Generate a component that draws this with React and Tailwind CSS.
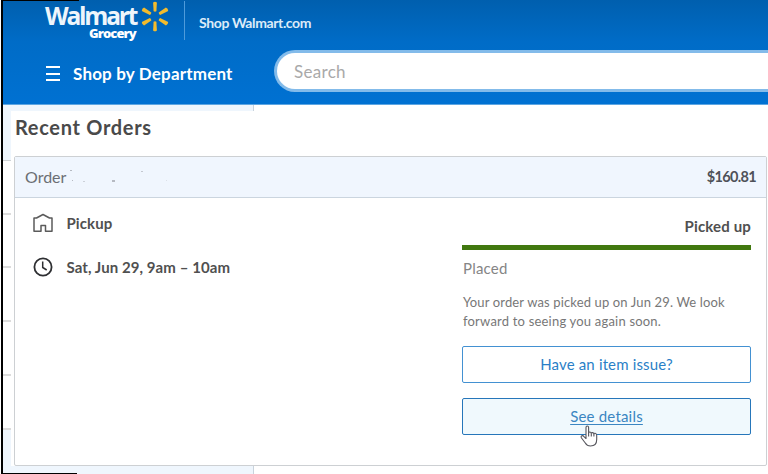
import React from "react";

function Spark() {
  return (
    <svg className="mt-px ml-[3px] h-[31px] w-[28px] shrink-0" viewBox="0 0 28 31" fill="#f3bb2c">
      <path d="M12.100 1.600q1.900-1.800 3.800 0L15.400 10.300q-1.400.8-2.800 0z" />
      <path d="M12.100 29.400q1.900 1.800 3.800 0L15.400 20.700q-1.400-.8-2.800 0z" />
      <path d="M.8 9.900q0-2.500 2.300-3.300l7.200 5q0 1.700-1.400 2.500z" />
      <path d="M27.200 9.900q0-2.500-2.300-3.300l-7.200 5q0 1.700 1.400 2.500z" />
      <path d="M.8 21.100q0 2.500 2.300 3.300l7.200-5q0-1.700-1.400-2.500z" />
      <path d="M27.200 21.100q0 2.500-2.300 3.300l-7.200-5q0-1.700 1.400-2.500z" />
    </svg>
  );
}

function Header() {
  return (
    <header className="h-[105px] shrink-0 overflow-hidden border-b border-[#5ea6e2] bg-linear-to-b from-[#005fae] via-[#006cc7] via-40% to-[#0071d2] text-white">
      <div className="flex h-[46px]">
        <div className="ml-[42px] w-[93px]">
          <div className="h-[27px] whitespace-nowrap font-['Open_Sans',sans-serif] text-[24.500px] leading-[32px] font-bold tracking-[-2.200px] text-[#eef5fb]">
            Walmart
          </div>
          <div className="pl-[44px] font-['Open_Sans',sans-serif] text-[13px] leading-[12px] font-extrabold tracking-[-0.900px]">
            Grocery
          </div>
        </div>
        <Spark />
        <div className="mt-px ml-[15px] h-[39px] w-px bg-[#4e9bdb]" />
        <a className="ml-[14px] whitespace-nowrap text-[14px] leading-[45px] font-bold tracking-[-0.380px] text-[#dcebf8]">
          Shop Walmart.com
        </a>
      </div>
      <div className="flex">
        <div className="mt-[20px] ml-[43px] flex h-[15px] w-[14px] flex-col justify-between">
          <span className="h-[2px] bg-white" />
          <span className="h-[2px] bg-white" />
          <span className="h-[2px] bg-white" />
        </div>
        <span className="ml-[13px] w-[201px] whitespace-nowrap text-[17px] leading-[56px] font-bold tracking-[0.180px]">
          Shop by Department
        </span>
        <div className="mt-[4px] h-[42px] flex-1 rounded-l-full border-[3px] border-r-0 border-[#83bbea] bg-white pl-[17px] text-[17px] leading-[37px] tracking-[0.300px] text-[#a9a9a9]">
          Search
        </div>
      </div>
    </header>
  );
}

function Rail() {
  return (
    <div className="flex w-[8px] flex-col">
      <div className="h-[56px] border-b border-[#cfd3d6] bg-[#eff6fd]" />
      <div className="h-[54px] border-b-2 border-[#dcdcdc]" />
      <div className="h-[53px] border-b-2 border-[#dcdcdc]" />
      <div className="h-[54px] border-b-2 border-[#dcdcdc]" />
      <div className="h-[54px] border-b-2 border-[#dcdcdc]" />
      <div className="h-[54px] border-b-2 border-[#dcdcdc]" />
      <div className="flex-1 bg-[#eff6fd]" />
    </div>
  );
}

function HomeIcon() {
  return (
    <svg className="h-[20px] w-[20px]" viewBox="0 0 20 20" fill="none" stroke="#5b5b5b" strokeWidth="1.5" strokeLinejoin="round">
      <path d="M1 18.300V5h2.500L10 1.500 16.500 5H19v13.300h-6.500V12.500H8v5.800z" />
    </svg>
  );
}

function ClockIcon() {
  return (
    <svg className="h-[20px] w-[20px]" viewBox="0 0 20 20" fill="none" stroke="#2e2f32" strokeWidth="1.800">
      <circle cx="10" cy="10" r="8.600" />
      <path d="M9.700 4.500v6l4 2.500" strokeWidth="1.500" />
    </svg>
  );
}

function HandCursor() {
  return (
    <svg className="absolute top-[27px] left-[118px] h-[22px] w-[19px]" viewBox="0 0 19 22" fill="#fff" stroke="#55555c" strokeWidth="1.100" strokeLinejoin="round">
      <path d="M6 13.500V2.500q0-1.500 1.300-1.500t1.300 1.500V8q.2-1 1.300-1t1.400 1.300q.3-.8 1.300-.7t1.300 1.200q.3-.6 1.200-.5 1.600.3 1.600 2.200v4q0 6.500-6.200 6.500-3.500 0-5.200-3L1.500 13q-.9-1.700.3-2.200 1.200-.5 2.200.8z" />
      <path d="M8.600 8v3.500M11.300 8.500v3M13.900 9v2.500" fill="none" />
    </svg>
  );
}

function OrderCard() {
  return (
    <section className="ml-[3px] h-[310px] w-[753px] rounded-[2px] border border-[#cdd0d3]">
      <div className="flex h-[41px] items-center justify-between border-b border-[#cbd5df] bg-[#f0f6fe] pr-[10px] pl-[10px]">
        <div className="flex text-[16px] leading-[40px] text-[#6b6e74]">
          Order
          <div className="ml-[4px] flex h-[14px] w-[100px] self-center">
            <i className="h-px w-[2px] bg-[#b6bac2]" />
            <i className="mt-[10px] h-px w-px bg-[#b6bac2]" />
            <i className="mt-[11px] ml-[10px] h-px w-[2px] bg-[#ccd1d9]" />
            <i className="mt-[10px] ml-[27px] h-[2px] w-[3px] bg-[#b6bac2]" />
            <i className="mt-[1px] ml-[26px] h-px w-[2px] bg-[#c4c8d0]" />
            <i className="mt-[10px] ml-[23px] h-px w-px bg-[#dce1e8]" />
          </div>
        </div>
        <span className="text-[14.500px] leading-[40px] font-bold tracking-[-0.680px] text-[#4e5158]">$160.81</span>
      </div>
      <div className="flex justify-between pr-[15px] pl-[17.500px]">
        <div className="text-[15px] leading-[20px] font-bold text-[#505050]">
          <div className="mt-[15px] flex h-[20px] gap-[14px]">
            <HomeIcon />
            <span className="tracking-[0.100px]">Pickup</span>
          </div>
          <div className="mt-[24px] flex h-[20px] gap-[14px]">
            <ClockIcon />
            <span className="tracking-[0.080px]">Sat, Jun 29, 9am – 10am</span>
          </div>
        </div>
        <div className="w-[289px]">
          <div className="mt-[18px] h-[29px] text-right text-[15px] leading-[20px] font-bold tracking-[0.150px] text-[#505050]">
            Picked up
          </div>
          <div className="h-[5px] bg-[#41780f]" />
          <div className="mt-[8px] pl-px text-[15px] leading-[20px] tracking-[0.200px] text-[#858585]">Placed</div>
          <p className="mt-[15px] pl-px text-[13px] leading-[19px] text-[#777]">
            <span className="block whitespace-nowrap tracking-[0.140px]">Your order was picked up on Jun 29. We look</span>
            <span className="block whitespace-nowrap tracking-[0.200px]">forward to seeing you again soon.</span>
          </p>
          <button className="mt-[15px] block h-[37px] w-full rounded-[2px] border-[1.500px] border-[#4391d2] text-center text-[15px] leading-[35px] tracking-[0.150px] text-[#2a7fc7]">
            Have an item issue?
          </button>
          <div className="relative mt-[15px]">
            <button className="block h-[37px] w-full rounded-[2px] border border-[#2676ba] bg-[#f0f9fd] text-center text-[15px] leading-[35px] tracking-[0.200px] text-[#3b86c2] underline underline-offset-2">
              See details
            </button>
            <HandCursor />
          </div>
        </div>
      </div>
    </section>
  );
}

export default function App() {
  return (
    <div className="flex h-[474px] w-[768px] overflow-hidden bg-white font-[Lato,sans-serif]">
      <div className="w-px" />
      <div className="w-[2px] bg-black" />
      <main className="relative flex w-[765px] flex-col">
        <div className="absolute top-0 left-0 h-px w-[76px] bg-black" />
        <div className="absolute bottom-0 left-0 h-px w-[74px] bg-black" />
        <Header />
        <div className="flex flex-1">
          <Rail />
          <div className="flex-1">
            <div className="h-[6px] w-[243px] border-r border-[#c9d3dc] bg-[#eff6fd]" />
            <h1 className="h-[45px] pl-[4px] text-[20px] leading-[33px] font-bold tracking-[0.680px] text-[#4a4a4a]">
              Recent Orders
            </h1>
            <OrderCard />
            <div className="h-[8px] w-[243px] border-r border-[#c9d3dc] bg-[#eff6fd]" />
          </div>
        </div>
      </main>
    </div>
  );
}
